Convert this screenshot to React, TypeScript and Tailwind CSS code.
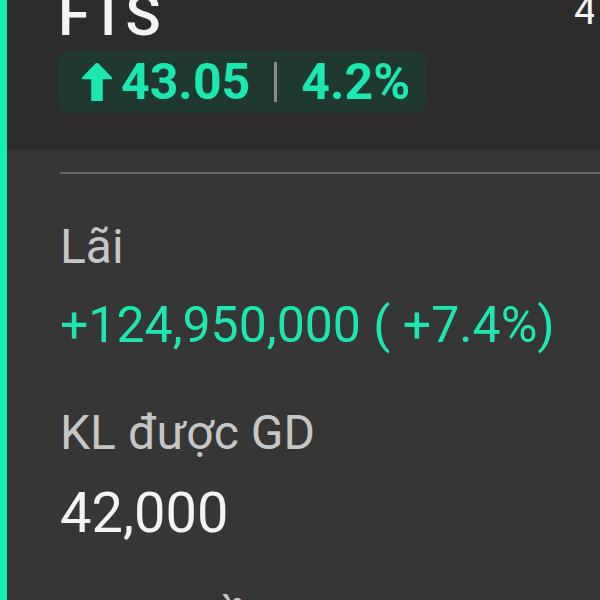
function ArrowUp() {
  return (
    <svg width="30" height="38" viewBox="0 0 30 38" className="shrink-0">
      <path d="M15 0 L30 15.5 L20 15.5 L20 38 L10 38 L10 15.5 L0 15.5 Z" fill="#1ae8b0" strokeLinejoin="round" stroke="#1ae8b0" strokeWidth="1.5" />
    </svg>
  )
}

export default function App() {
  return (
    <div className="w-[600px] h-[600px] overflow-hidden flex bg-[#363636] font-['Roboto',sans-serif]">
      <div className="w-[7px] shrink-0 bg-[#14efb3]" />
      <div className="flex-1 flex flex-col min-w-0">
        <div className="h-[150px] shrink-0 bg-[#2d2c2a] overflow-hidden">
          <div className="flex justify-between pl-[51px] pr-[6px]">
            <div className="-mt-[14px] text-[58px] leading-none font-medium text-[#f4f4f4]">FTS</div>
            <div className="-mt-[9px] w-[20px] overflow-hidden text-[40px] leading-none text-[#f4f4f4] whitespace-nowrap">42,000</div>
          </div>
          <div className="pl-[51px] mt-[6px]">
            <div className="inline-flex items-center h-[63px] pl-[24px] pr-[16px] rounded-[10px] bg-[#1f3830]">
              <ArrowUp />
              <span className="ml-[9px] text-[50px] leading-none font-bold text-[#1ae8b0]">43.05</span>
              <div className="mx-[24px] w-[3px] h-[40px] bg-[#8a8a8a]" />
              <span className="text-[50px] leading-none font-bold text-[#1ae8b0]">4.2%</span>
            </div>
          </div>
        </div>

        <div className="pl-[53px]">
          <div className="mt-[22px] h-[2px] bg-[#6a6a6a]" />

          <div className="mt-[49px] text-[48px] leading-none text-[#c6c6c6]">Lãi</div>
          <div className="mt-[29px] text-[50px] leading-none text-[#1de6b0] whitespace-nowrap">+124,950,000 ( +7.4%)</div>

          <div className="mt-[59px] text-[48px] leading-none text-[#c6c6c6]">KL được GD</div>
          <div className="mt-[28px] text-[56px] leading-none text-[#f4f4f4]">42,000</div>

          <div className="mt-[53px] text-[48px] leading-none text-[#c6c6c6]">KL CK về</div>
          <div className="mt-[29px] text-[56px] leading-none text-[#f4f4f4]">0</div>
        </div>
      </div>
    </div>
  )
}
